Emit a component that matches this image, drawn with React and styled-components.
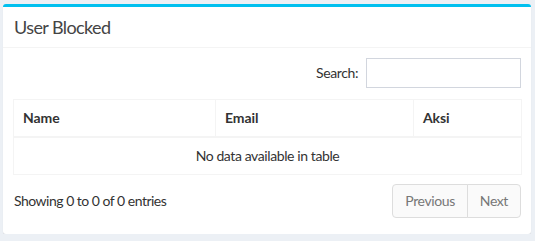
import React from "react";
import styled, { createGlobalStyle } from "styled-components";

const GlobalStyle = createGlobalStyle`
  html, body {
    margin: 0;
    padding: 0;
    background: #ecf0f5;
  }
  body {
    font-family: "Source Sans Pro", Lato, "Liberation Sans", sans-serif;
    font-size: 14px;
    line-height: 1.42857;
    letter-spacing: -0.4px;
    color: #333;
  }
  * { box-sizing: border-box; }
`;

const Page = styled.div`
  padding: 4px 4px 0 3px;
`;

const Box = styled.div`
  width: 528px;
  background: #fff;
  border-top: 3px solid #00c0ef;
  border-radius: 3px;
  box-shadow: 0 1px 1px rgba(0, 0, 0, 0.1);
`;

const BoxHeader = styled.div`
  padding: 10px;
  border-bottom: 1px solid #f4f4f4;
`;

const BoxTitle = styled.h3`
  margin: 0;
  padding-left: 1px;
  font-size: 18px;
  font-weight: 400;
  line-height: 20px;
  letter-spacing: -0.6px;
  color: #444;
`;

const BoxBody = styled.div`
  padding: 10px 10px 16px;
`;

const FilterRow = styled.div`
  display: flex;
  justify-content: flex-end;
  align-items: center;
  margin-bottom: 11px;
`;

const FilterLabel = styled.label`
  display: flex;
  align-items: center;
  gap: 8px;
`;

const SearchInput = styled.input`
  width: 155px;
  height: 30px;
  border: 1px solid #d2d6de;
  border-radius: 0;
  padding: 5px 10px;
  font: inherit;
  outline: none;
`;

const Table = styled.table`
  width: 508px;
  table-layout: fixed;
  border-collapse: collapse;
  border: 1px solid #f4f4f4;
`;

const Th = styled.th`
  width: ${(p) => p.w}px;
  text-align: left;
  font-weight: 700;
  letter-spacing: -0.1px;
  padding: 8px 9px;
  line-height: 20px;
  border: 1px solid #f4f4f4;
  border-bottom-width: 2px;
`;

const EmptyCell = styled.td`
  text-align: center;
  padding: 8px;
  line-height: 20px;
  border: 1px solid #f4f4f4;
`;

const FooterRow = styled.div`
  display: flex;
  justify-content: space-between;
  align-items: center;
  margin-top: 9px;
`;

const Info = styled.div`
  padding-left: 1px;
  letter-spacing: -0.5px;
`;

const Pagination = styled.ul`
  display: flex;
  margin: 0;
  padding: 0;
  list-style: none;
`;

const PageLink = styled.li`
  padding: 6px 12px;
  line-height: 20px;
  color: #777;
  background: #fafafa;
  border: 1px solid #ddd;
  margin-left: -1px;
  &:first-child {
    margin-left: 0;
    border-radius: 4px 0 0 4px;
  }
  &:last-child {
    border-radius: 0 4px 4px 0;
  }
`;

export default function App() {
  return (
    <Page>
      <GlobalStyle />
      <Box>
        <BoxHeader>
          <BoxTitle>User Blocked</BoxTitle>
        </BoxHeader>
        <BoxBody>
          <FilterRow>
            <FilterLabel>
              Search:
              <SearchInput type="search" />
            </FilterLabel>
          </FilterRow>
          <Table>
            <thead>
              <tr>
                <Th w={202}>Name</Th>
                <Th w={198}>Email</Th>
                <Th w={108}>Aksi</Th>
              </tr>
            </thead>
            <tbody>
              <tr>
                <EmptyCell colSpan={3}>No data available in table</EmptyCell>
              </tr>
            </tbody>
          </Table>
          <FooterRow>
            <Info>Showing 0 to 0 of 0 entries</Info>
            <Pagination>
              <PageLink>Previous</PageLink>
              <PageLink>Next</PageLink>
            </Pagination>
          </FooterRow>
        </BoxBody>
      </Box>
    </Page>
  );
}
